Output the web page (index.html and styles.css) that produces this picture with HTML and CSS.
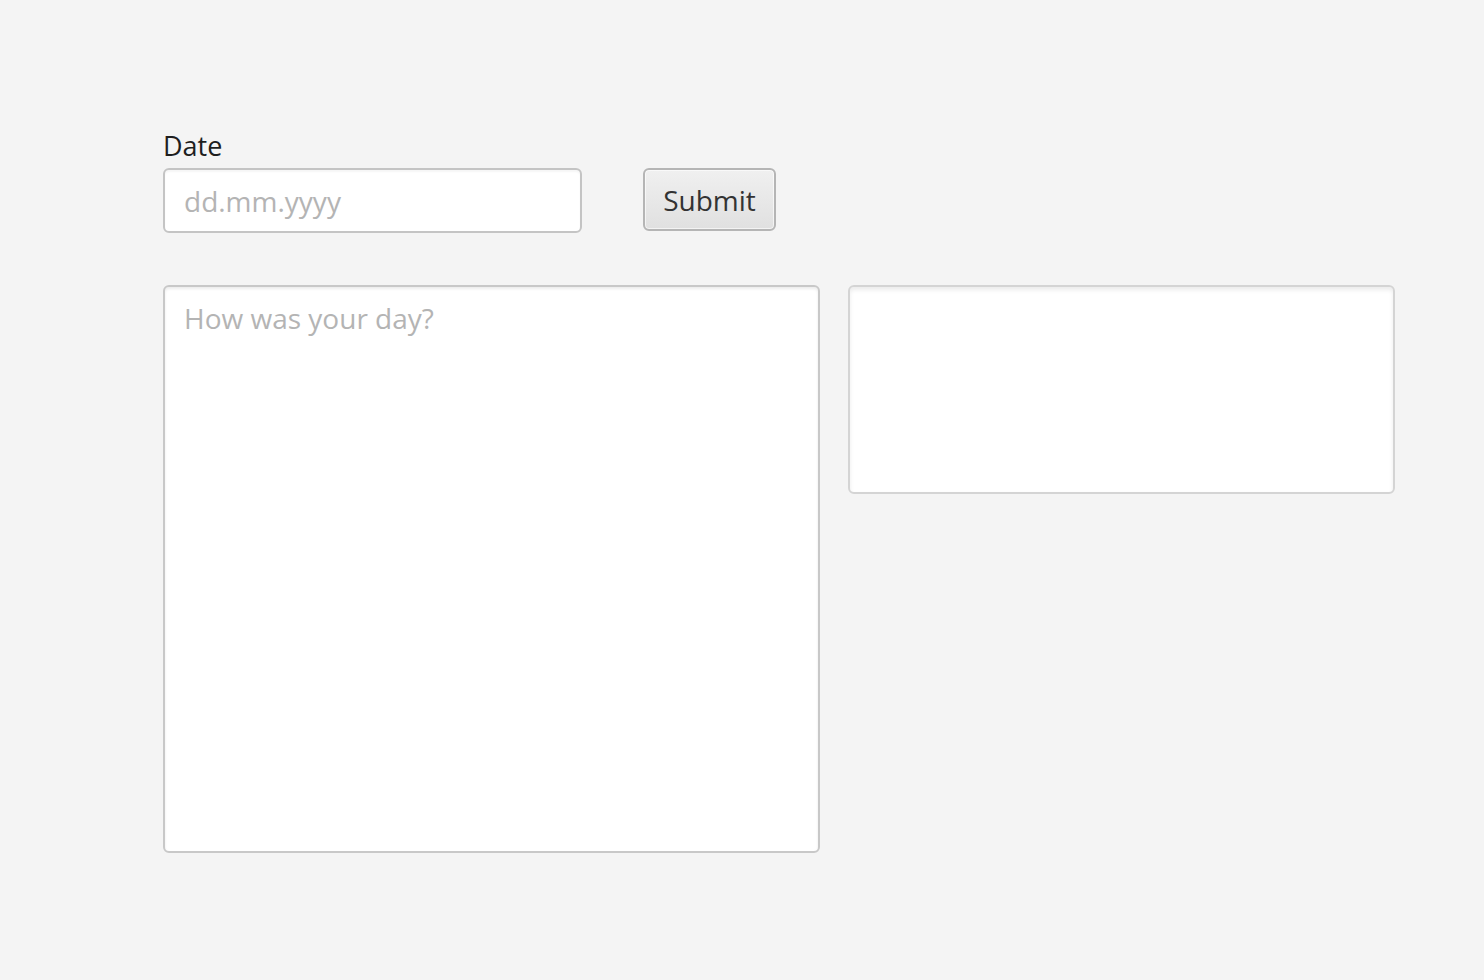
FILE: index.html
```html
<!DOCTYPE html>
<html>
<head>
<meta charset="utf-8">
<link rel="stylesheet" href="styles.css">
</head>
<body>
<main class="app">
  <div class="top-row">
    <div class="field-group">
      <label class="label" for="date">Date</label>
      <input id="date" class="text-field" type="text" placeholder="dd.mm.yyyy">
    </div>
    <button class="btn" type="button">Submit</button>
  </div>
  <div class="bottom-row">
    <textarea class="text-area" placeholder="How was your day?"></textarea>
    <div class="output-box"></div>
  </div>
</main>
</body>
</html>
```

FILE: styles.css
```css
* { box-sizing: border-box; }
html, body {
  margin: 0;
  height: 100%;
  background: #f4f4f4;
}
body {
  font-family: "Open Sans", "Noto Sans", sans-serif;
  color: #222;
}
.app {
  padding: 126px 0 0 163px;
  display: flex;
  flex-direction: column;
  gap: 52px;
}
.top-row {
  display: flex;
  align-items: flex-end;
  gap: 61px;
}
.field-group {
  display: flex;
  flex-direction: column;
  gap: 2px;
}
.label {
  font-size: 27px;
  line-height: 40px;
  color: #1e1e1e;
}
.text-field {
  width: 419px;
  height: 65px;
  border: 2px solid #c4c4c4;
  border-radius: 6px;
  background: #fff;
  box-shadow: inset 0 2px 2px rgba(0,0,0,0.04);
  padding: 0 19px;
  font-family: inherit;
  font-size: 28px;
  color: #333;
  outline: none;
}
.text-field::placeholder { color: #b4b4b4; }
.btn {
  width: 133px;
  height: 63px;
  margin-bottom: 2px;
  border: 2px solid #b5b5b5;
  border-radius: 6px;
  background: linear-gradient(#f0f0f0, #e0e0e0);
  box-shadow: inset 0 0 0 1px rgba(255,255,255,0.6);
  font-family: inherit;
  font-size: 28px;
  color: #333;
  padding: 0;
}
.bottom-row {
  display: flex;
  align-items: flex-start;
  gap: 28px;
}
.text-area {
  width: 657px;
  height: 568px;
  border: 2px solid #c8c8c8;
  border-radius: 6px;
  background: #fff;
  box-shadow: inset 0 2px 3px rgba(0,0,0,0.08);
  padding: 12px 19px;
  font-family: inherit;
  font-size: 28px;
  line-height: 38px;
  color: #333;
  resize: none;
  outline: none;
}
.text-area::placeholder { color: #b4b4b4; }
.output-box {
  width: 547px;
  height: 209px;
  border: 2px solid #d4d4d4;
  border-radius: 6px;
  background: #fff;
  box-shadow: inset 0 3px 4px rgba(0,0,0,0.08);
}
```
